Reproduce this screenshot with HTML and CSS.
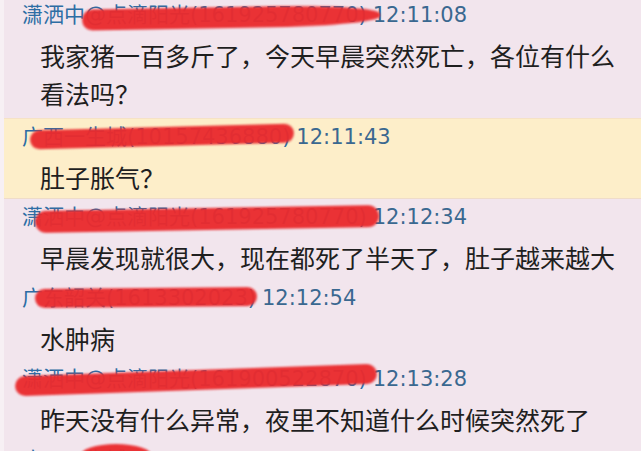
FILE: index.html
```html
<!DOCTYPE html>
<html lang="zh-CN">
<head>
<meta charset="UTF-8">
<title>聊天记录</title>
<link rel="stylesheet" href="styles.css">
</head>
<body>
<div class="chat">
  <div class="msg first">
    <div class="head"><span class="name s1">潇洒中@点滴阳光(161925780770)</span><span class="time">12:11:08</span></div>
    <div class="text">我家猪一百多斤了，今天早晨突然死亡，各位有什么<br>看法吗？</div>
  </div>
  <div class="msg hl">
    <div class="head"><span class="name s2">广西一生城(10157436880)</span><span class="time">12:11:43</span></div>
    <div class="text">肚子胀气？</div>
  </div>
  <div class="msg">
    <div class="head"><span class="name s3">潇洒中@点滴阳光(161925780770)</span><span class="time">12:12:34</span></div>
    <div class="text">早晨发现就很大，现在都死了半天了，肚子越来越大</div>
  </div>
  <div class="msg">
    <div class="head"><span class="name s4">广东韶关(1613302023)</span><span class="time">12:12:54</span></div>
    <div class="text">水肿病</div>
  </div>
  <div class="msg">
    <div class="head"><span class="name s5">潇洒中@点滴阳光(161900522870)</span><span class="time">12:13:28</span></div>
    <div class="text">昨天没有什么异常，夜里不知道什么时候突然死了</div>
  </div>
  <div class="msg">
    <div class="head"><span class="name s6">广西一生城(10157436880)</span><span class="time">12:13:51</span></div>
  </div>
</div>
</body>
</html>
```

FILE: styles.css
```css
/* ---- QQ 群聊记录截图 ---- */
body{margin:0;background:#f2e5ed;overflow:hidden;}
.chat{margin-top:-3px;border-left:4px solid #f7f0f4;height:460px;}
.msg{padding:0 0 0 18px;height:81px;box-sizing:border-box;}
.msg.first{height:121px;}
.hl{background:#fdeec9;border-top:1px solid #f6e2c6;border-bottom:1px solid #efdcc9;}

.head{height:36px;line-height:36px;font-family:"DejaVu Sans","Noto Sans CJK SC",sans-serif;
      font-size:21px;white-space:nowrap;}
.name{position:relative;display:inline-block;height:36px;vertical-align:top;
      color:#2d6da4;margin-right:6px;}
.time{color:#3a6890;}

.text{margin:3px 0 0 18px;line-height:38px;font-size:25px;color:#1f1f1f;
      font-family:"Noto Sans CJK SC","Microsoft YaHei",sans-serif;}

/* 红色涂抹（遮挡昵称） */
.name::after{content:"";position:absolute;background:#ea2b2e;border-radius:11px;
             filter:blur(1px);opacity:.96;}
.s1::after{left:60px;top:10px;width:298px;height:21px;transform:rotate(-1deg);
           border-radius:12px 40% 40% 12px / 12px 50% 50% 12px;}
.s2::after{left:8px;top:8px;width:264px;height:19px;transform:rotate(-1.5deg);}
.s3::after{left:13px;top:9px;width:344px;height:22px;transform:rotate(-1deg);}
.s4::after{left:13px;top:8px;width:222px;height:19px;transform:rotate(-.5deg);}
.s5::after{left:-7px;top:9px;width:362px;height:20px;transform:rotate(-2deg);}
.s6::after{left:58px;top:2px;width:72px;height:24px;border-radius:50%;}
```
